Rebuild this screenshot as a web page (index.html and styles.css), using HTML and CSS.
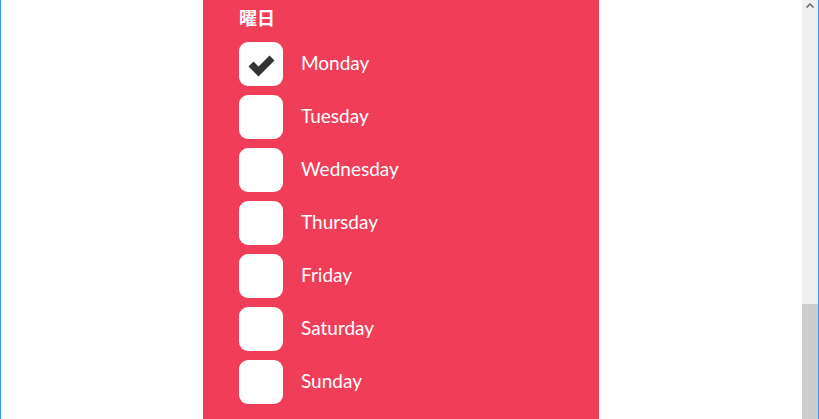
FILE: index.html
```html
<!DOCTYPE html>
<html lang="ja">
<head>
<meta charset="utf-8">
<link rel="stylesheet" href="styles.css">
</head>
<body>
<div class="frame">
  <main class="content">
    <section class="panel">
      <h2 class="title">曜日</h2>
      <ul class="days">
        <li class="day"><span class="box"><svg class="check" viewBox="0 0 44 44" width="44" height="44"><path d="M12 22 L19.5 29.5 L33 16" fill="none" stroke="#333" stroke-width="7" stroke-linejoin="miter" stroke-linecap="butt"/></svg></span><span class="label">Monday</span></li>
        <li class="day"><span class="box"></span><span class="label">Tuesday</span></li>
        <li class="day"><span class="box"></span><span class="label">Wednesday</span></li>
        <li class="day"><span class="box"></span><span class="label">Thursday</span></li>
        <li class="day"><span class="box"></span><span class="label">Friday</span></li>
        <li class="day"><span class="box"></span><span class="label">Saturday</span></li>
        <li class="day"><span class="box"></span><span class="label">Sunday</span></li>
      </ul>
    </section>
  </main>
  <div class="scrollbar">
    <div class="arrow"><svg viewBox="0 0 8 5" width="8" height="5"><path d="M0 4 L4 0 L8 4 L7 5 L4 2 L1 5 Z" fill="#606060"/></svg></div>
    <div class="track"></div>
    <div class="thumb"></div>
  </div>
</div>
</body>
</html>
```
FILE: styles.css
```css
* { box-sizing: border-box; }
html, body { margin: 0; padding: 0; height: 100%; overflow: hidden; background: #fff; }
body { font-family: Lato, "Noto Sans CJK JP", sans-serif; }
.frame {
  display: flex;
  height: 419px;
  border-left: 1px solid #3399ff;
  border-right: 1px solid #3399ff;
}
.content {
  flex: 1;
  display: flex;
  justify-content: center;
  padding-right: 1px;
  overflow: hidden;
}
.panel {
  width: 396px;
  background: #f03e59;
  padding: 0 36px 20px;
  height: 440px;
}
.title {
  margin: 0 0 8px;
  font-family: "Noto Sans CJK JP", sans-serif;
  font-size: 18px;
  font-weight: 700;
  line-height: 34px;
  color: #fff;
}
.days {
  list-style: none;
  margin: 0;
  padding: 0;
  display: flex;
  flex-direction: column;
  gap: 9px;
}
.day {
  display: flex;
  align-items: center;
  height: 44px;
}
.box {
  width: 44px;
  height: 44px;
  background: #fff;
  border-radius: 9px;
}
.check { display: block; }
.label {
  margin-left: 18px;
  font-size: 19px;
  line-height: 24px;
  padding-bottom: 3px;
  color: #fff;
}
.scrollbar {
  width: 16px;
  background: #f0f0f0;
  display: flex;
  flex-direction: column;
}
.arrow {
  height: 17px;
  display: flex;
  justify-content: center;
  padding-top: 3px;
  padding-right: 1px;
}
.arrow svg { display: block; }
.track { flex: 1; }
.thumb {
  height: 115px;
  background: #cdcdcd;
}
```
